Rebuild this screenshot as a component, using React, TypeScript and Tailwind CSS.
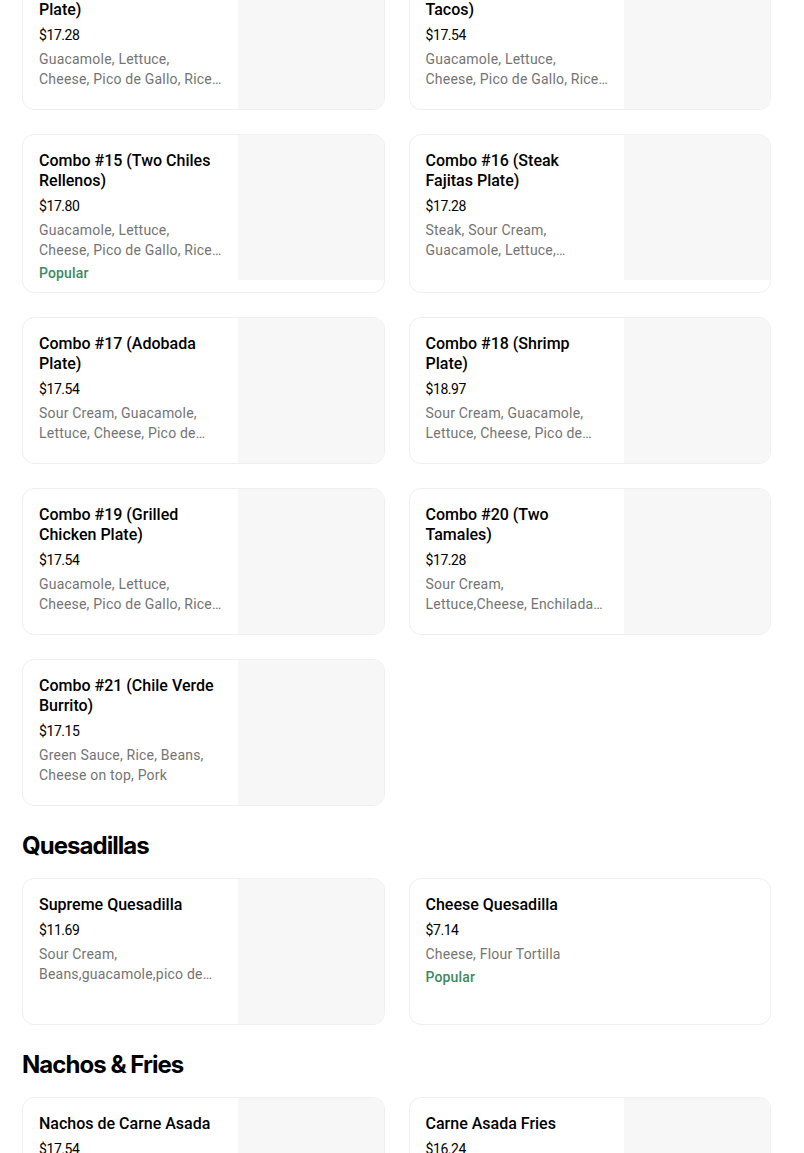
import React from "react";

type Item = {
  name: string;
  price: string;
  desc: string;
  popular?: boolean;
  image?: boolean;
};

const combos: Item[] = [
  { name: "Combo #13 (Enchiladas Plate)", price: "$17.28", desc: "Guacamole, Lettuce, Cheese, Pico de Gallo, Rice, Beans, Tortillas" },
  { name: "Combo #14 (Carnitas Tacos)", price: "$17.54", desc: "Guacamole, Lettuce, Cheese, Pico de Gallo, Rice, Beans" },
  { name: "Combo #15 (Two Chiles Rellenos)", price: "$17.80", desc: "Guacamole, Lettuce, Cheese, Pico de Gallo, Rice, Beans", popular: true },
  { name: "Combo #16 (Steak Fajitas Plate)", price: "$17.28", desc: "Steak, Sour Cream, Guacamole, Lettuce, Cheese, Rice, Beans" },
  { name: "Combo #17 (Adobada Plate)", price: "$17.54", desc: "Sour Cream, Guacamole, Lettuce, Cheese, Pico de Gallo, Rice, Beans" },
  { name: "Combo #18 (Shrimp Plate)", price: "$18.97", desc: "Sour Cream, Guacamole, Lettuce, Cheese, Pico de Gallo, Rice" },
  { name: "Combo #19 (Grilled Chicken Plate)", price: "$17.54", desc: "Guacamole, Lettuce, Cheese, Pico de Gallo, Rice, Beans" },
  { name: "Combo #20 (Two Tamales)", price: "$17.28", desc: "Sour Cream, Lettuce,Cheese, Enchilada Sauce, Rice, Beans" },
  { name: "Combo #21 (Chile Verde Burrito)", price: "$17.15", desc: "Green Sauce, Rice, Beans, Cheese on top, Pork" },
];

const quesadillas: Item[] = [
  { name: "Supreme Quesadilla", price: "$11.69", desc: "Sour Cream, Beans,guacamole,pico de gallo, Cheese, Flour Tortilla" },
  { name: "Cheese Quesadilla", price: "$7.14", desc: "Cheese, Flour Tortilla", popular: true, image: false },
];

const nachos: Item[] = [
  { name: "Nachos de Carne Asada", price: "$17.54", desc: "Sour Cream, Guacamole, Cheese, Beans, Pico de Gallo" },
  { name: "Carne Asada Fries", price: "$16.24", desc: "Sour Cream, Guacamole, Cheese, Pico de Gallo" },
];

function Card({ item }: { item: Item }) {
  const hasImage = item.image !== false;
  return (
    <div className="flex min-h-[147px] overflow-hidden rounded-xl border border-[#efefef] bg-white">
      <div className="flex min-w-0 flex-1 flex-col px-4 pt-4 pb-[10px]">
        <div className="text-[16px] font-medium leading-5 text-black">{item.name}</div>
        <div className="mt-[5px] text-[14px] leading-5 tracking-[-0.03em] text-black">{item.price}</div>
        <div className="mt-1 line-clamp-2 text-[14px] leading-5 tracking-[0.015em] text-[#747474]">
          {item.desc}
        </div>
        {item.popular && (
          <div className="mt-1 text-[14px] font-medium leading-[18px] tracking-[0.01em] text-[#3b8a5f]">
            Popular
          </div>
        )}
      </div>
      {hasImage && <div className="h-[145px] w-[146px] shrink-0 self-start bg-[#f7f7f7]" />}
    </div>
  );
}

function Section({ title, items }: { title?: string; items: Item[] }) {
  return (
    <section>
      {title && (
        <h2 className="mt-6 mb-4 font-['Inter'] text-[24px] font-bold leading-8 tracking-[-0.04em] text-black">
          {title}
        </h2>
      )}
      <div className="grid grid-cols-2 gap-6">
        {items.map((it) => (
          <Card key={it.name} item={it} />
        ))}
      </div>
    </section>
  );
}

export default function App() {
  return (
    <div
      className="h-[1153px] w-[804px] overflow-hidden bg-white"
      style={{ fontFamily: "Roboto, 'Liberation Sans', sans-serif" }}
    >
      <div className="-mt-[37px] ml-[22px] w-[749px]">
        <Section items={combos} />
        <Section title="Quesadillas" items={quesadillas} />
        <Section title="Nachos & Fries" items={nachos} />
      </div>
    </div>
  );
}
